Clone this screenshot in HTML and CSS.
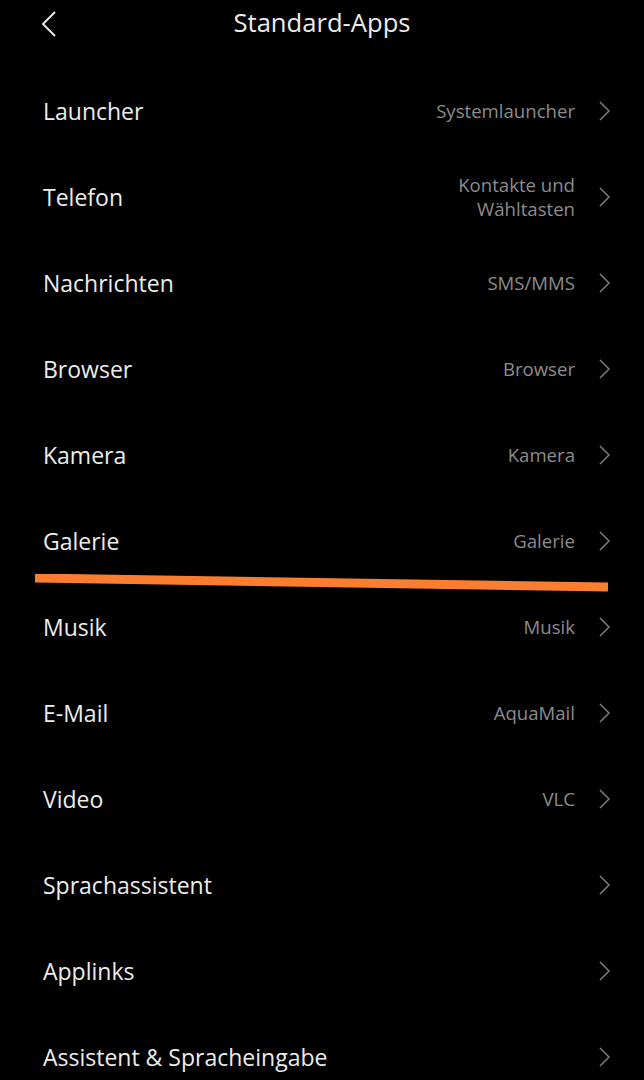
FILE: index.html
```html
<!DOCTYPE html>
<html lang="de">
<head>
<meta charset="utf-8">
<title>Standard-Apps</title>
<link rel="stylesheet" href="styles.css">
</head>
<body>
<div class="screen">
  <header class="header">
    <svg class="back" width="16" height="26" viewBox="0 0 16 26"><polyline points="14,1 2,13 14,25" fill="none" stroke="#e6e6e6" stroke-width="2"/></svg>
    <h1 class="title">Standard-Apps</h1>
  </header>
  <ul class="list">
    <li class="row"><span class="label">Launcher</span><span class="value">Systemlauncher</span><svg class="chev" width="12" height="20" viewBox="0 0 12 20"><polyline points="1,1 10,10 1,19" fill="none" stroke="#777" stroke-width="1.6"/></svg></li>
    <li class="row"><span class="label">Telefon</span><span class="value">Kontakte und<br>Wähltasten</span><svg class="chev" width="12" height="20" viewBox="0 0 12 20"><polyline points="1,1 10,10 1,19" fill="none" stroke="#777" stroke-width="1.6"/></svg></li>
    <li class="row"><span class="label">Nachrichten</span><span class="value">SMS/MMS</span><svg class="chev" width="12" height="20" viewBox="0 0 12 20"><polyline points="1,1 10,10 1,19" fill="none" stroke="#777" stroke-width="1.6"/></svg></li>
    <li class="row"><span class="label">Browser</span><span class="value">Browser</span><svg class="chev" width="12" height="20" viewBox="0 0 12 20"><polyline points="1,1 10,10 1,19" fill="none" stroke="#777" stroke-width="1.6"/></svg></li>
    <li class="row"><span class="label">Kamera</span><span class="value">Kamera</span><svg class="chev" width="12" height="20" viewBox="0 0 12 20"><polyline points="1,1 10,10 1,19" fill="none" stroke="#777" stroke-width="1.6"/></svg></li>
    <li class="row"><span class="label">Galerie</span><span class="value">Galerie</span><svg class="chev" width="12" height="20" viewBox="0 0 12 20"><polyline points="1,1 10,10 1,19" fill="none" stroke="#777" stroke-width="1.6"/></svg></li>
    <li class="row"><span class="label">Musik</span><span class="value">Musik</span><svg class="chev" width="12" height="20" viewBox="0 0 12 20"><polyline points="1,1 10,10 1,19" fill="none" stroke="#777" stroke-width="1.6"/></svg></li>
    <li class="row"><span class="label">E-Mail</span><span class="value">AquaMail</span><svg class="chev" width="12" height="20" viewBox="0 0 12 20"><polyline points="1,1 10,10 1,19" fill="none" stroke="#777" stroke-width="1.6"/></svg></li>
    <li class="row"><span class="label">Video</span><span class="value">VLC</span><svg class="chev" width="12" height="20" viewBox="0 0 12 20"><polyline points="1,1 10,10 1,19" fill="none" stroke="#777" stroke-width="1.6"/></svg></li>
    <li class="row"><span class="label">Sprachassistent</span><span class="value"></span><svg class="chev" width="12" height="20" viewBox="0 0 12 20"><polyline points="1,1 10,10 1,19" fill="none" stroke="#777" stroke-width="1.6"/></svg></li>
    <li class="row"><span class="label">Applinks</span><span class="value"></span><svg class="chev" width="12" height="20" viewBox="0 0 12 20"><polyline points="1,1 10,10 1,19" fill="none" stroke="#777" stroke-width="1.6"/></svg></li>
    <li class="row"><span class="label">Assistent &amp; Spracheingabe</span><span class="value"></span><svg class="chev" width="12" height="20" viewBox="0 0 12 20"><polyline points="1,1 10,10 1,19" fill="none" stroke="#777" stroke-width="1.6"/></svg></li>
  </ul>
  <svg class="mark" width="644" height="20" viewBox="0 0 644 20"><line x1="35" y1="4" x2="608" y2="13" stroke="#fb7d2f" stroke-width="9"/></svg>
</div>
</body>
</html>
```

FILE: styles.css
```css
html, body {
  margin: 0;
  padding: 0;
  background: #000;
}
.screen {
  position: relative;
  width: 644px;
  height: 1080px;
  overflow: hidden;
  background: #000;
  font-family: "Open Sans", "Noto Sans", sans-serif;
  color: #ececec;
}
.header {
  position: relative;
  height: 46px;
  display: flex;
  align-items: center;
  justify-content: center;
}
.back {
  position: absolute;
  left: 41px;
  top: 11px;
}
.title {
  margin: 0;
  font-size: 25.6px;
  font-weight: 400;
  color: #ececec;
  line-height: 46px;
}
.list {
  list-style: none;
  margin: 0;
  padding: 22px 33px 0 43px;
}
.row {
  height: 86px;
  display: flex;
  align-items: center;
}
.label {
  flex: 1;
  font-size: 23px;
  color: #ececec;
}
.value {
  font-size: 18.6px;
  line-height: 24px;
  color: #8c8c8c;
  text-align: right;
  margin-right: 24px;
}
.chev {
  flex: none;
}
.mark {
  position: absolute;
  left: 0;
  top: 574px;
}
```
